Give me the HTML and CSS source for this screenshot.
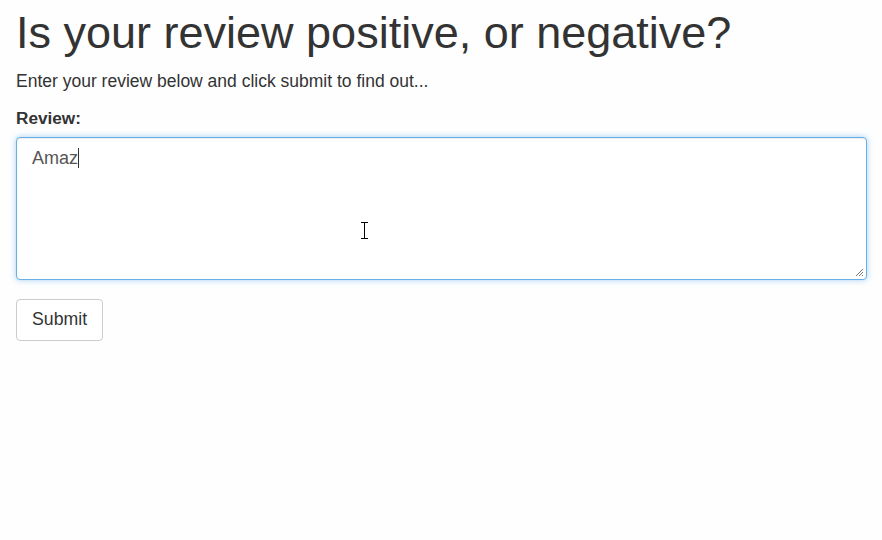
FILE: index.html
```html
<!DOCTYPE html>
<html>
<head>
<meta charset="utf-8">
<link rel="stylesheet" href="styles.css">
</head>
<body>
<div class="container">
  <h1 class="title">Is your review positive, or negative?</h1>
  <p class="lead">Enter your review below and click submit to find out...</p>
  <form class="form">
    <label class="label" for="review">Review:</label>
    <div class="field">
      <div class="textarea" id="review">Amaz<span class="caret"></span></div>
      <svg class="ibeam" width="9" height="17" viewBox="0 0 9 17"><path d="M1 0.5h7M1 16.5h7M4.5 0.5v16" stroke="#000" stroke-width="1" fill="none"/></svg>
      <svg class="grip" width="9" height="9" viewBox="0 0 9 9"><path d="M1 8L8 1M4 8L8 4M7 8L8 7" stroke="#777" stroke-width="1" fill="none"/></svg>
    </div>
    <button type="button" class="btn">Submit</button>
  </form>
</div>
</body>
</html>
```
FILE: styles.css
```css
html, body {
  margin: 0;
  padding: 0;
  background: #fefefe;
}
body {
  font-family: "Liberation Sans", Arial, sans-serif;
  color: #333;
}
.container {
  padding: 0 15px 0 16px;
}
.title {
  margin: 0;
  padding-top: 8px;
  font-size: 45px;
  font-weight: 400;
  line-height: 50px;
  color: #333;
}
.lead {
  margin: 13px 0 0;
  font-size: 17.5px;
  line-height: 20px;
}
.form {
  display: flex;
  flex-direction: column;
  align-items: flex-start;
}
.label {
  margin-top: 17px;
  font-weight: 700;
  font-size: 17.2px;
  line-height: 20px;
}
.field {
  position: relative;
  align-self: stretch;
  margin-top: 9px;
}
.textarea {
  box-sizing: border-box;
  height: 143px;
  border: 1px solid #66afe9;
  border-radius: 4px;
  box-shadow: inset 0 1px 1px rgba(0,0,0,.075), 0 0 6px rgba(102,175,233,.6);
  padding: 9px 15px;
  font-size: 18px;
  line-height: 22px;
  color: #555;
  background: #fff;
}
.caret {
  display: inline-block;
  width: 1px;
  height: 20px;
  background: #333;
  vertical-align: -4px;
}
.ibeam {
  position: absolute;
  left: 344px;
  top: 85px;
}
.grip {
  position: absolute;
  right: 3px;
  bottom: 3px;
}
.btn {
  margin-top: 19px;
  box-sizing: border-box;
  height: 42px;
  padding: 0 15px 2px;
  font-family: "Liberation Sans", Arial, sans-serif;
  font-size: 17.7px;
  color: #333;
  background: #fff;
  border: 1px solid #ccc;
  border-radius: 4px;
}
```
